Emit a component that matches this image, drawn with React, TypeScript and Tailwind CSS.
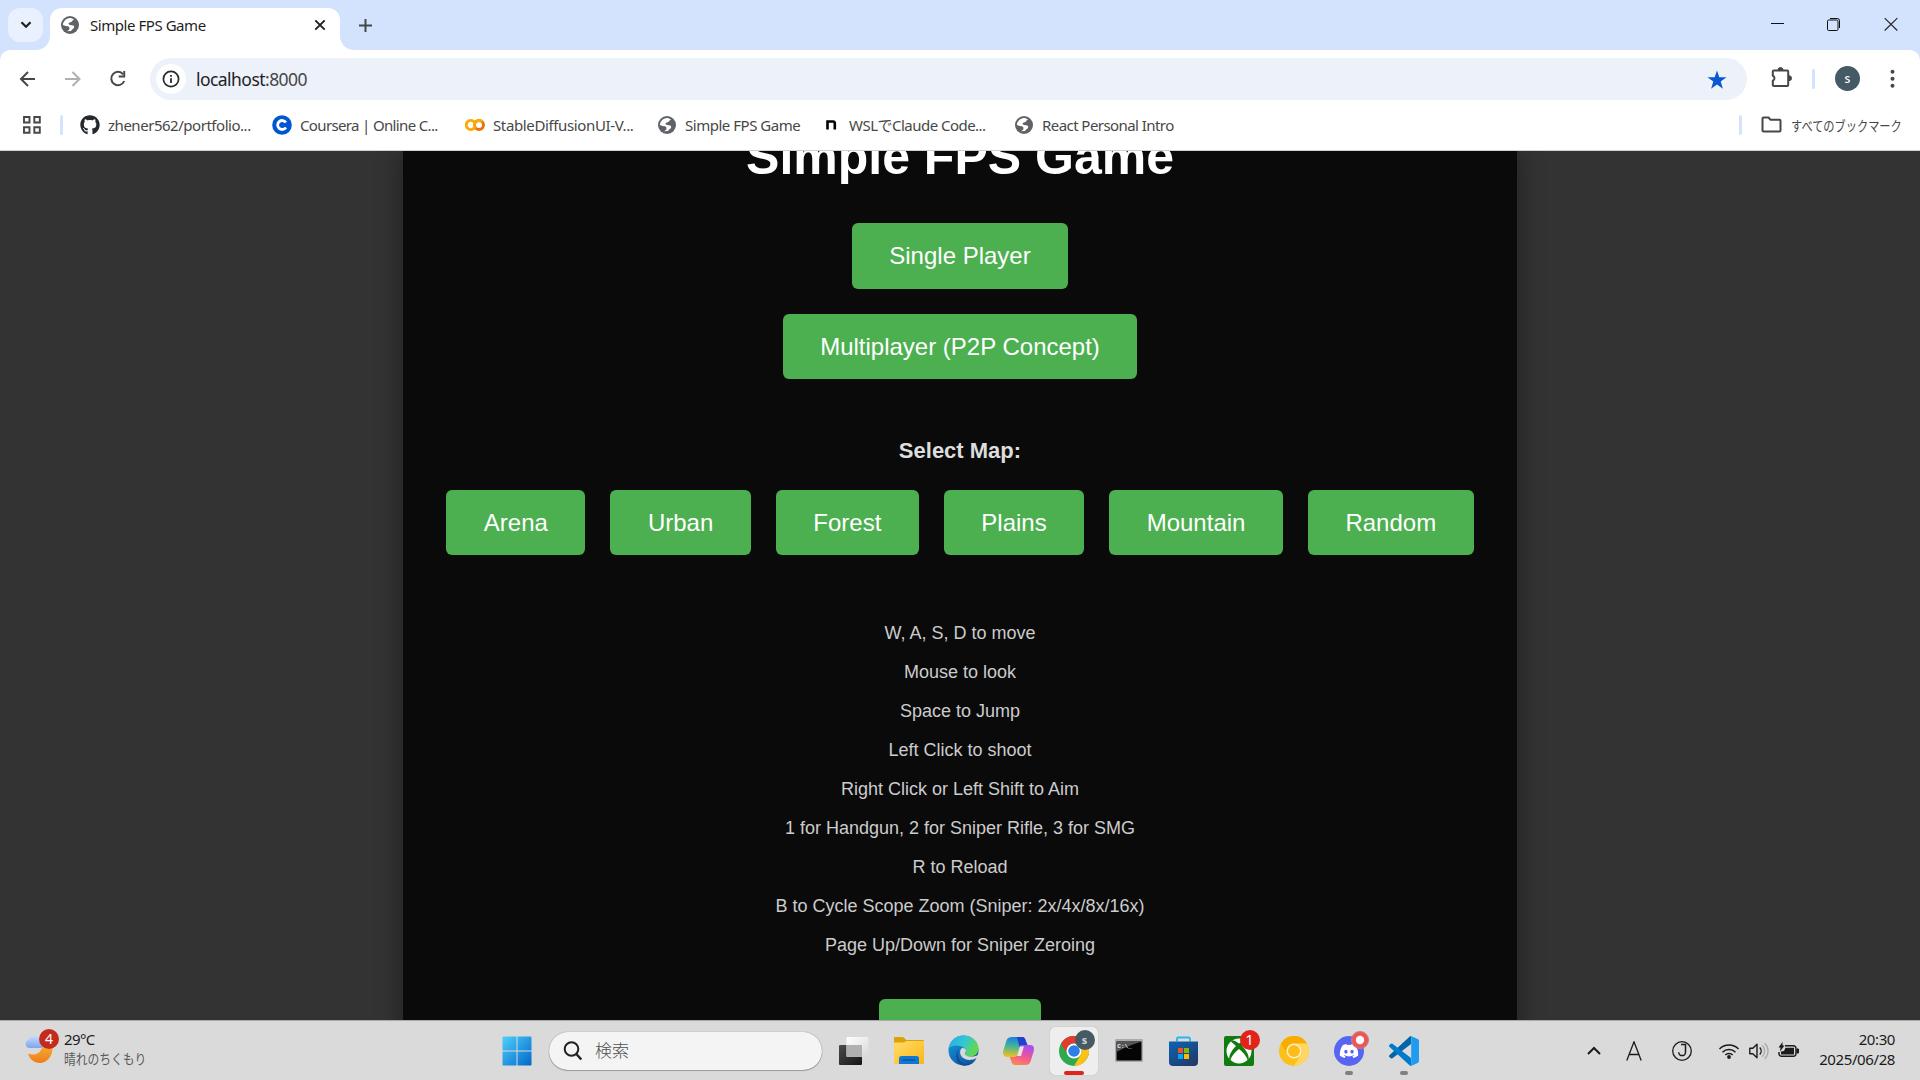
import React from "react";
import { FaGithub, FaDiscord } from "react-icons/fa";

const ui = "font-['Noto_Sans','Noto_Sans_CJK_JP',sans-serif]";
const stroke = { fill: "none", strokeLinecap: "butt" as const };

function Globe() {
  return (
    <svg width="20" height="20" viewBox="0 0 20 20" className="shrink-0">
      <circle cx="10" cy="10" r="9" fill="#5f6368" />
      <path d="M14 4.600C11.500 6 12.500 7.300 9.800 7.600c-1.800.2-1.600 1.900 0 2.300 2.400.4 4.400 0 4.400 2.100 0 1.900-2.500 1.900-3.100 3.900l-4.800.4C7.800 15.900 9.500 15 9.500 13.200c0-1.500-1.200-2-3.200-2L2.900 9.900C3.200 6.200 6.200 3.200 9.800 3c1.600 0 3 .6 4.200 1.600z" fill="#fff" />
      <path d="M3.200 11.600h3.900c1.600 0 2.200.8 1.700 2-.5 1.100-1.800 1.200-1.800 2.800C4.900 15.500 3.500 13.600 3.200 11.600z" fill="#5f6368" />
    </svg>
  );
}

function Coursera() {
  return (
    <svg width="20" height="20" viewBox="0 0 20 20" className="shrink-0">
      <circle cx="10" cy="10" r="9.800" fill="#0056d2" />
      <path d="M13.900 7.500A4.500 4.500 0 1 0 13.900 12.500" stroke="#fff" strokeWidth="2.800" {...stroke} />
    </svg>
  );
}

function Colab() {
  return (
    <svg width="20" height="20" viewBox="0 0 20 20" className="shrink-0">
      <path d="M9.200 6.900A4.600 4.600 0 1 0 9.200 13.100" stroke="#f9ab00" strokeWidth="2.900" {...stroke} />
      <circle cx="14" cy="10" r="4.500" stroke="#e8710a" strokeWidth="2.900" fill="none" />
      <path d="M10.800 13.200A4.500 4.500 0 0 1 17.200 6.800" stroke="#f9ab00" strokeWidth="2.900" {...stroke} />
    </svg>
  );
}

function NoteN() {
  return (
    <svg width="20" height="20" viewBox="0 0 20 20" className="shrink-0">
      <path d="M6.500 14.500V6.500H12a1.800 1.800 0 0 1 1.800 1.800v6.200" stroke="#000" strokeWidth="2.600" {...stroke} />
    </svg>
  );
}

const bookmarks = [
  { label: "zhener562/portfolio...", icon: <FaGithub size={20} color="#24292f" className="shrink-0" />, w: "w-[192px]", t: "tracking-[-0.47px]" },
  { label: "Coursera | Online C...", icon: <Coursera />, w: "w-[193px]", t: "tracking-[-0.65px]" },
  { label: "StableDiffusionUI-V...", icon: <Colab />, w: "w-[192px]", t: "tracking-[-0.37px]" },
  { label: "Simple FPS Game", icon: <Globe />, w: "w-[164px]", t: "tracking-[-0.48px]" },
  { label: "WSLでClaude Code...", icon: <NoteN />, w: "w-[193px]", t: "tracking-[-0.52px]" },
  { label: "React Personal Intro", icon: <Globe />, w: "w-[193px]", t: "tracking-[-0.56px]" },
];

function TabStrip() {
  return (
    <div className="flex h-[50px] shrink-0 bg-[#d3e3fd] pl-2">
      <div className="mt-2 flex h-[34px] w-[35px] items-center justify-center rounded-xl bg-[#e9f0fe]">
        <svg width="12" height="8" viewBox="0 0 12 8"><path d="M1.500 1.200L6 5.700l4.500-4.500" stroke="#1f1f1f" strokeWidth="2.200" fill="none" /></svg>
      </div>
      <div className="relative ml-[7px] mt-[8px] flex h-[42px] w-[290px] items-center rounded-t-[12px] bg-white pb-[8px] pl-[10px] pr-[14px]">
        <svg className="absolute bottom-0 -left-[14px]" width="14" height="14" viewBox="0 0 14 14"><path d="M14 0v14H0A14 14 0 0 0 14 0z" fill="#fff" /></svg>
        <svg className="absolute bottom-0 -right-[14px]" width="14" height="14" viewBox="0 0 14 14"><path d="M0 0v14h14A14 14 0 0 1 0 0z" fill="#fff" /></svg>
        <Globe />
        <span className="ml-[10px] grow text-[15px] leading-5 tracking-[-0.45px] text-[#1f1f1f]">Simple FPS Game</span>
        <svg width="12" height="12" viewBox="0 0 12 12"><path d="M1.300 1.300l9.400 9.400M10.700 1.300l-9.400 9.400" stroke="#1f1f1f" strokeWidth="1.900" /></svg>
      </div>
      <svg className="ml-[19px] mt-[19px]" width="13" height="13" viewBox="0 0 13 13"><path d="M6.500 0v13M0 6.500h13" stroke="#444746" strokeWidth="2" /></svg>
      <div className="ml-auto flex w-[149px] items-start justify-between pr-[22px] pt-[17px]">
        <svg className="mt-[6px]" width="13" height="2" viewBox="0 0 13 2"><path d="M0 .5h13" stroke="#111" /></svg>
        <svg width="14" height="14" viewBox="0 0 14 14"><rect x=".5" y="3" width="10.500" height="10.500" rx="1.200" stroke="#111" fill="none" /><path d="M3 1.500h7.500a2 2 0 0 1 2 2V11" stroke="#111" fill="none" /></svg>
        <svg width="14" height="14" viewBox="0 0 14 14"><path d="M.7 1.200l12.600 12.300M13.300 1.200L.7 13.500" stroke="#222" strokeWidth="1.100" /></svg>
      </div>
    </div>
  );
}

function Toolbar() {
  return (
    <div className="shrink-0 bg-[#d3e3fd]">
      <div className="flex h-[50px] items-start rounded-t-[10px] bg-white pt-2">
        <svg className="ml-[17px] mt-[9px]" width="22" height="24" viewBox="0 0 22 24"><path d="M18 12H4.500M11 5l-7 7 7 7" stroke="#474747" strokeWidth="2" fill="none" /></svg>
        <svg className="ml-[23px] mt-[9px]" width="22" height="24" viewBox="0 0 22 24"><path d="M3 12h14M10.500 5l7 7-7 7" stroke="#b0b0b0" strokeWidth="2" fill="none" /></svg>
        <svg className="ml-[22px] mt-[9px]" width="24" height="24" viewBox="0 0 24 24"><path d="M17.200 7.300A6.700 6.700 0 1 0 18.200 14" stroke="#474747" strokeWidth="2" fill="none" /><path d="M19.200 4v6.500h-6.500v-2H17.300V4z" fill="#474747" /></svg>
        <div className="ml-[20px] flex h-[42px] w-[1597px] items-center rounded-full bg-[#ecf1fa] px-[6px]">
          <div className="flex h-[30px] w-[30px] items-center justify-center rounded-full bg-white">
            <svg width="18" height="18" viewBox="0 0 18 18"><circle cx="9" cy="9" r="7.600" stroke="#2a2a2a" strokeWidth="1.700" fill="none" /><path d="M9 8.200v4.800M9 4.900v1.900" stroke="#2a2a2a" strokeWidth="1.800" /></svg>
          </div>
          <span className="ml-[10px] grow text-[17.500px] leading-6 tracking-[-0.55px] text-[#1f1f1f]">localhost<span className="text-[#474747]">:8000</span></span>
          <svg className="mr-[14px] mt-[2px]" width="20" height="20" viewBox="0 0 20 20"><path d="M10 .5l2.300 6.800h7.200l-5.800 4.200 2.200 7.300L10 14.500l-5.900 4.300 2.200-7.300L.5 7.300h7.200z" fill="#0b57d0" /></svg>
        </div>
        <svg className="ml-[22px] mt-[8px]" width="24" height="24" viewBox="0 0 24 24"><path d="M3.800 5.500a1 1 0 0 1 1-1h13.400a1 1 0 0 1 1 1v13.400a1 1 0 0 1-1 1H4.800a1 1 0 0 1-1-1v-4.200a2.700 2.700 0 0 0 0-5z" stroke="#474747" strokeWidth="2" fill="none" strokeLinejoin="round" /><path d="M9 4a2.500 2.500 0 0 1 5 0zM20 9.700a2.500 2.500 0 0 1 0 5z" fill="#474747" stroke="#474747" /></svg>
        <div className="ml-[19px] mt-[11px] h-5 w-[3px] rounded bg-[#d3e3fd]" />
        <div className="ml-[20px] mt-[8px] flex h-[25px] w-[25px] items-center justify-center rounded-full bg-[#455a64] text-[12px] font-medium leading-none text-white">s</div>
        <svg className="ml-[30px] mt-[11px]" width="5" height="20" viewBox="0 0 5 20"><g fill="#474747"><circle cx="2.500" cy="2.700" r="2" /><circle cx="2.500" cy="9.700" r="2" /><circle cx="2.500" cy="16.700" r="2" /></g></svg>
      </div>
    </div>
  );
}

function BookmarkBar() {
  return (
    <div className="flex h-[51px] shrink-0 items-center border-b border-[#d0d0d0] bg-white pl-[22px] text-[15px] text-[#474747]">
      <svg width="20" height="20" viewBox="0 0 20 20"><path d="M2 2h5.500v5.500H2zM12.300 2h5.500v5.500h-5.500zM2 12.300h5.500v5.500H2zM12.300 12.300h5.500v5.500h-5.500z" stroke="#474747" strokeWidth="1.900" fill="none" /></svg>
      <div className="ml-[18px] mr-[17px] h-5 w-[3px] rounded bg-[#d3e3fd]" />
      {bookmarks.map((b) => (
        <div key={b.label} className={`flex shrink-0 items-center gap-2 whitespace-nowrap ${b.w} ${b.t}`}>
          {b.icon}
          <span className="leading-5">{b.label}</span>
        </div>
      ))}
      <div className="ml-auto h-5 w-[3px] rounded bg-[#d3e3fd]" />
      <svg className="ml-[18px]" width="24" height="20" viewBox="0 0 24 20"><path d="M2.500 3.500a1 1 0 0 1 1-1h5l2 2.200h9a1 1 0 0 1 1 1v9.800a1 1 0 0 1-1 1h-16a1 1 0 0 1-1-1z" stroke="#474747" strokeWidth="2" fill="none" /></svg>
      <div className="ml-[7px] mr-[17px] w-[112px]">
        <span className="inline-block origin-left scale-x-[0.8] whitespace-nowrap text-[14px] leading-5">すべてのブックマーク</span>
      </div>
    </div>
  );
}

const greenButton = "flex shrink-0 items-center rounded-[6px] bg-[#4caf50] px-[37.5px] text-[24px] leading-none text-white";
const maps = ["Arena", "Urban", "Forest", "Plains", "Mountain", "Random"];
const controls = [
  "W, A, S, D to move",
  "Mouse to look",
  "Space to Jump",
  "Left Click to shoot",
  "Right Click or Left Shift to Aim",
  "1 for Handgun, 2 for Sniper Rifle, 3 for SMG",
  "R to Reload",
  "B to Cycle Scope Zoom (Sniper: 2x/4x/8x/16x)",
  "Page Up/Down for Sniper Zeroing",
];

function GamePage() {
  return (
    <div className="flex h-[869px] shrink-0 items-start justify-center overflow-hidden bg-[#333] font-['Liberation_Sans',Arial,sans-serif]">
      <div className="flex h-[960px] w-[1114px] shrink-0 flex-col items-center bg-[#0a0a0a] shadow-[0_0_25px_rgba(0,0,0,0.4)]">
        <h1 className="-mt-[23px] h-[95px] shrink-0 text-[50px] font-bold leading-[58px] text-white">Simple FPS Game</h1>
        <button className={`h-[66px] ${greenButton}`}>Single Player</button>
        <button className={`mt-[25px] h-[65px] ${greenButton}`}>Multiplayer (P2P Concept)</button>
        <h3 className="mt-[59px] h-[52px] shrink-0 text-[22px] font-bold leading-[26px] text-[#ddd]">Select Map:</h3>
        <div className="flex shrink-0 gap-[25px]">
          {maps.map((m) => <button key={m} className={`h-[65px] ${greenButton}`}>{m}</button>)}
        </div>
        <div className="mt-[59px] flex shrink-0 flex-col items-center text-[18px] leading-[39px] text-[#ccc]">
          {controls.map((c) => <p key={c}>{c}</p>)}
        </div>
        <button className={`mt-[34px] h-[65px] w-[162px] ${greenButton}`} aria-label="Settings" />
      </div>
    </div>
  );
}

function Cell({ children, active, running }: { children: React.ReactNode; active?: boolean; running?: boolean }) {
  return (
    <div className="flex w-[55px] shrink-0 justify-center">
      <div className={`relative flex h-[48px] w-[48px] items-center justify-center rounded-[5px] ${active ? "bg-[#eeeeee] shadow-[0_0_1px_rgba(0,0,0,0.3)]" : ""}`}>
        {children}
        {active && <div className="absolute bottom-0 left-[14px] h-1 w-5 rounded-full bg-[#e2231a]" />}
        {running && <div className="absolute bottom-0 left-5 h-1 w-2 rounded-full bg-[#808080]" />}
      </div>
    </div>
  );
}

function Chrome() {
  return (
    <svg width="30" height="30" viewBox="0 0 48 48">
      <circle cx="24" cy="24" r="24" fill="#2da94f" />
      <path d="M3.200 12A24 24 0 0 1 44.800 12H24a12 12 0 0 0-10.400 18z" fill="#e33b2e" />
      <path d="M44.800 12A24 24 0 0 1 24 48l10.400-18A12 12 0 0 0 24 12z" fill="#fbc116" />
      <circle cx="24" cy="24" r="12" fill="#fff" />
      <circle cx="24" cy="24" r="9.300" fill="#2f7de9" />
    </svg>
  );
}

function Canary() {
  return (
    <svg width="30" height="30" viewBox="0 0 48 48">
      <circle cx="24" cy="24" r="24" fill="#fbc11a" />
      <path d="M3.200 12A24 24 0 0 1 44.800 12H24a12 12 0 0 0-10.400 18z" fill="#f9ab00" />
      <path d="M44.800 12A24 24 0 0 1 24 48l10.400-18A12 12 0 0 0 24 12z" fill="#fdd663" />
      <circle cx="24" cy="24" r="12" fill="#fff1c2" />
      <circle cx="24" cy="24" r="9.600" fill="#fbbc1c" />
    </svg>
  );
}

function TaskbarApps() {
  return (
    <div className="flex">
      <Cell>
        <svg width="30" height="28" viewBox="0 0 30 28">
          <defs><linearGradient id="tv" x2="1" y2="1"><stop stopColor="#4a4a4a" /><stop offset="1" stopColor="#151515" /></linearGradient><linearGradient id="tw" x2="1" y2="1"><stop stopColor="#fff" /><stop offset="1" stopColor="#d8d8d8" /></linearGradient></defs>
          <rect y="8" width="23" height="20" rx="1" fill="url(#tv)" /><rect x="7.500" width="22" height="20" rx="1" fill="url(#tw)" /><path d="M7.500 8H23v12H8.500a1 1 0 0 1-1-1z" fill="#b0b0b0" />
        </svg>
      </Cell>
      <Cell>
        <svg width="30" height="27" viewBox="0 0 30 27">
          <defs><linearGradient id="fo" x2="1" y2="1"><stop stopColor="#ffdd6b" /><stop offset="1" stopColor="#fbb714" /></linearGradient></defs>
          <path d="M0 1a1 1 0 0 1 1-1h8l3.500 3H29a1 1 0 0 1 1 1v4H0z" fill="#dfa007" /><path d="M0 5.500h10L12.500 4H30v22a1 1 0 0 1-1 1H1a1 1 0 0 1-1-1z" fill="url(#fo)" /><path d="M5 27v-5.500a2.500 2.500 0 0 1 2.500-2.500h15a2.500 2.500 0 0 1 2.500 2.500V27z" fill="#0f78d0" /><path d="M8.500 23h13" stroke="#0a4f94" strokeWidth="1.300" />
        </svg>
      </Cell>
      <Cell>
        <svg width="31" height="31" viewBox="0 0 31 31">
          <defs>
            <linearGradient id="e1" x2="1" y2=".4"><stop stopColor="#29a9e6" /><stop offset=".55" stopColor="#33c6d5" /><stop offset="1" stopColor="#62d84f" /></linearGradient>
            <linearGradient id="e2" x2=".6" y2="1"><stop stopColor="#1b9de2" /><stop offset="1" stopColor="#0c59a4" /></linearGradient>
          </defs>
          <circle cx="15.500" cy="15.500" r="15" fill="url(#e2)" />
          <path d="M.5 13.500C2 5 8.500.5 15.500.5c8.800 0 15 6 15 13 0 5-4 8-8 8-3.500 0-6-1-5.500-2.300 1.500-2 1.500-4-.5-5.800-4-3.500-11.500-4-16 .1z" fill="url(#e1)" />
          <path d="M11.500 13.200c-3 4-2.500 10 1.500 13.500 4 3.500 10 3 15-2.700-3 6-9 7.500-14 6.300C7.500 28 6.500 17 11.500 13.200z" fill="#134a94" />
          <path d="M17 19.200c-.3-1.200 1.500-2.200.8-4.200-.8-1.600-2.500-2.300-4-1.800-2.500 1.800-2.400 7 1.400 9.800 3.800 2.800 9.300 2.500 13.600-.3 1-.9 1.700-2 1.900-3.200-2 1.500-4.500 2-7.200 2-3.500 0-6-.9-6.500-2.300z" fill="#d9d9d9" />
        </svg>
      </Cell>
      <Cell>
        <svg width="31" height="28" viewBox="0 0 31 28">
          <defs>
            <linearGradient id="c1" x1=".4" x2=".3" y2="1"><stop stopColor="#1b7fe0" /><stop offset=".45" stopColor="#3fb59a" /><stop offset="1" stopColor="#f5c21a" /></linearGradient>
            <linearGradient id="c2" x1=".6" x2=".2" y2="1"><stop stopColor="#a94df0" /><stop offset=".5" stopColor="#ef5794" /><stop offset="1" stopColor="#ff8a50" /></linearGradient>
          </defs>
          <path d="M9 0h10c2.500 0 3.300 2 4 4.500L24.500 8H20c-2.500 0-3 1-4 4l-2.500 8H4c-4 0-4.500-3-3.500-7L3.300 4C4.300 1 6 0 9 0z" fill="url(#c1)" />
          <path d="M14 0h5c2.500 0 3.300 2 4 4.500L24.500 8H20c-1.800 0-2.700.5-3.500 2z" fill="#1d42d0" />
          <path d="M22 28H12c-2.500 0-3.300-2-4-4.500L6.800 20H11c2.500 0 3-1 4-4l2.500-8H27c4 0 4.500 3 3.500 7L27.700 24c-1 3-2.700 4-5.700 4z" fill="url(#c2)" />
          <path d="M17 9.500h4l-3 9.500h-4z" fill="#e9e3e6" />
        </svg>
      </Cell>
      <Cell active>
        <Chrome />
        <div className="absolute left-[25px] top-[3px] flex h-5 w-5 items-center justify-center rounded-full bg-[#455a64] text-[11px] font-bold leading-none text-[#cfd8dc]">s</div>
      </Cell>
      <Cell>
        <svg width="28" height="23" viewBox="0 0 28 23"><rect width="28" height="23" rx="1" fill="#a8adb2" /><rect x="1.500" y="2.500" width="25" height="19" fill="#050505" /><path d="M1.500 2.500h25C20 5 12 7 1.500 13z" fill="#555" /><text x="2.300" y="8.500" fontSize="6" fontWeight="bold" fontFamily="Liberation Mono" fill="#eee">C:\_</text></svg>
      </Cell>
      <Cell>
        <svg width="29" height="30" viewBox="0 0 29 30">
          <defs><linearGradient id="st" x2=".8" y2="1"><stop stopColor="#0c64b4" /><stop offset="1" stopColor="#213a68" /></linearGradient></defs>
          <path d="M8 5.500V2.700A1.200 1.200 0 0 1 9.200 1.500h10.600A1.200 1.200 0 0 1 21 2.700v2.800" stroke="#26b5ee" strokeWidth="1.800" fill="none" /><path d="M0 5.500h29V26a4 4 0 0 1-4 4H4a4 4 0 0 1-4-4z" fill="url(#st)" />
          <path d="M9 12h5v5H9z" fill="#f25022" /><path d="M15 12h5v5h-5z" fill="#7fba00" /><path d="M9 18h5v5H9z" fill="#00a4ef" /><path d="M15 18h5v5h-5z" fill="#ffb900" />
        </svg>
      </Cell>
      <Cell>
        <svg width="30" height="30" viewBox="0 0 30 30"><rect width="30" height="30" rx="2" fill="#107c10" /><circle cx="15" cy="15" r="12.500" fill="#fff" /><path d="M6.300 4.500C9 3.500 12 5.200 15 7.500c3-2.300 6-4 8.700-3L22 6.500 18 10c4 4 7 8.500 6.800 13.500l-1 1C22.500 20 19 16 15 13c-4 3-7.500 7-8.800 11.500l-1-1C5 18.500 8 14 12 10L8 6.500z" fill="#107c10" /></svg>
        <div className="absolute left-[25px] top-[3px] flex h-5 w-5 items-center justify-center rounded-full bg-[#e2231a] text-[15px] leading-none text-white">1</div>
      </Cell>
      <Cell><Canary /></Cell>
      <Cell running>
        <div className="flex h-[30px] w-[30px] items-center justify-center rounded-full bg-[#5865f2]"><FaDiscord size={20} color="#fff" /></div>
        <svg className="absolute left-[26px] top-[4px]" width="18" height="18" viewBox="0 0 18 18"><circle cx="9" cy="9" r="8.500" fill="#f25455" stroke="#b98284" /><circle cx="9" cy="9" r="4.200" fill="#fff" /></svg>
      </Cell>
      <Cell running>
        <svg width="30" height="30" viewBox="0 0 30 30"><path d="M22 0v8L3.500 22.300a1.300 1.300 0 0 1-1.600 0L.4 21a1.200 1.200 0 0 1 0-1.800L20.500.7z" fill="#0065a9" /><path d="M22 30v-8L3.500 7.700a1.300 1.300 0 0 0-1.600 0L.4 9a1.200 1.200 0 0 0 0 1.800l20.100 18.500z" fill="#007acc" /><path d="M22 30c-.8 0-1.500-.4-1.800-.8.900.5 2 .2 2-1.200V2c0-1.400-1.100-1.700-2-1.200.3-.4 1-.8 1.800-.8l6.700 3A2.200 2.200 0 0 1 30 5v20a2.200 2.200 0 0 1-1.300 2z" fill="#1f9cf0" /></svg>
      </Cell>
    </div>
  );
}

function Taskbar() {
  return (
    <div className="flex h-[60px] shrink-0 items-center border-t border-[#a9a9a9] bg-[#dadada] text-[#1b1b1b]">
      <div className="relative ml-[24px] h-[40px] w-[40px]">
        <svg className="-mt-[2px]" width="40" height="40" viewBox="0 0 40 40">
          <defs><linearGradient id="mo" x2="0" y2="1"><stop stopColor="#f8b83a" /><stop offset="1" stopColor="#ee7c1b" /></linearGradient><linearGradient id="cl" x2="0" y2="1"><stop stopColor="#c5dcfb" /><stop offset="1" stopColor="#7fa6ea" /></linearGradient></defs>
          <path d="M4 24.500c7 3.500 15.500-1.500 15.500-12h8c4 12-3.500 21.500-11.500 21.500-6 0-10.500-4-12-9.500z" fill="url(#mo)" />
          <path d="M5 19a4.300 4.300 0 0 1-.3-8.300A6.500 6.500 0 0 1 16 9.500 5 5 0 0 1 17 19z" fill="url(#cl)" />
        </svg>
        <div className="absolute left-[15px] -top-[2px] flex h-5 w-5 items-center justify-center rounded-full bg-[#c42b1c] text-[14px] leading-none text-white">4</div>
      </div>
      <div className="w-[438px] pb-[4px] text-[15px] leading-5">
        <div className="tracking-[-0.6px]">29°C</div>
        <div className="origin-left scale-x-[0.84] text-[14px] text-[#5a5a5a]">晴れのちくもり</div>
      </div>
      <svg width="30" height="30" viewBox="0 0 30 30">
        <defs><linearGradient id="wi" x2="1" y2="1"><stop stopColor="#4fd0fb" /><stop offset="1" stopColor="#0067c9" /></linearGradient></defs>
        <path d="M1.500.5h13v14h-14v-13a1 1 0 0 1 1-1zM15.500.5h13a1 1 0 0 1 1 1v13h-14zM.5 15.500h14v14h-13a1 1 0 0 1-1-1zM15.500 15.500h14v13a1 1 0 0 1-1 1h-13z" fill="url(#wi)" />
      </svg>
      <div className="ml-[17px] flex h-[38px] w-[273px] items-center rounded-full bg-[#f4f4f4] pl-[14px] shadow-[0_0_1px_rgba(0,0,0,0.5),0_1px_1px_rgba(0,0,0,0.25)]">
        <svg width="20" height="20" viewBox="0 0 20 20"><circle cx="8.500" cy="8" r="6.800" stroke="#222" strokeWidth="2" fill="none" /><path d="M13.300 13l5 5.500" stroke="#222" strokeWidth="2.400" /></svg>
        <span className="ml-[12px] text-[17px] font-light leading-6 text-[#505050]">検索</span>
      </div>
      <div className="ml-[4px]"><TaskbarApps /></div>
      <div className="ml-auto flex items-center pr-[25px]">
        <svg width="14" height="9" viewBox="0 0 14 9"><path d="M1 8l6-6 6 6" stroke="#1b1b1b" strokeWidth="2" fill="none" /></svg>
        <svg className="ml-[25px]" width="16" height="20" viewBox="0 0 16 20"><path d="M.8 19.500L8 .8l7.200 18.700M3 13.500h10" stroke="#1b1b1b" strokeWidth="1.300" fill="none" /></svg>
        <svg className="ml-[30px]" width="20" height="20" viewBox="0 0 20 20"><circle cx="10" cy="10" r="9.300" stroke="#1b1b1b" strokeWidth="1.300" fill="none" /><path d="M9 3.500h4.500v7.700a3.400 3.400 0 0 1-6.800 0" stroke="#1b1b1b" strokeWidth="1.500" fill="none" /></svg>
        <svg className="ml-[26px]" width="22" height="18" viewBox="0 0 22 18"><g stroke="#1b1b1b" strokeWidth="1.500" fill="none"><path d="M1.500 7a13.400 13.400 0 0 1 19 0M4.500 10.200a9.200 9.200 0 0 1 13 0M7.300 13a5.200 5.200 0 0 1 7.400 0" /></g><circle cx="11" cy="15" r="1.900" fill="#1b1b1b" /></svg>
        <svg className="ml-[9px]" width="20" height="18" viewBox="0 0 20 18"><path d="M.8 6.300h3L8 2.300v13.400l-4.200-4h-3z" stroke="#1b1b1b" strokeWidth="1.400" fill="none" strokeLinejoin="round" /><path d="M10.700 5.500a5 5 0 0 1 0 7" stroke="#1b1b1b" strokeWidth="1.400" fill="none" /><path d="M13.200 3.300a8 8 0 0 1 0 11.400M15.800 1.200a11 11 0 0 1 0 15.600" stroke="#aaa" strokeWidth="1.300" fill="none" /></svg>
        <svg className="ml-[9px]" width="22" height="18" viewBox="0 0 22 18"><path d="M7 3.800h8.500a2.500 2.500 0 0 1 2.500 2.500v5.500a2.500 2.500 0 0 1-2.500 2.500h-12A2.500 2.500 0 0 1 1 11.800V10" stroke="#1b1b1b" strokeWidth="1.500" fill="none" /><path d="M7.500 5.800H16v6.700H3V9.500L6 9z" fill="#1b1b1b" /><path d="M19 7h1.500v4H19z" fill="#1b1b1b" stroke="#1b1b1b" /><path d="M4.500 0L.5 5.500h2L2 9.500l4.500-6h-2z" fill="#1b1b1b" /></svg>
        <div className="w-[95px] whitespace-nowrap pb-[4px] text-right text-[15px] leading-5 tracking-[-0.4px]"><div>20:30</div><div>2025/06/28</div></div>
      </div>
    </div>
  );
}

export default function App() {
  return (
    <div className={`flex h-[1080px] w-[1920px] flex-col overflow-hidden ${ui}`}>
      <TabStrip />
      <Toolbar />
      <BookmarkBar />
      <GamePage />
      <Taskbar />
    </div>
  );
}
